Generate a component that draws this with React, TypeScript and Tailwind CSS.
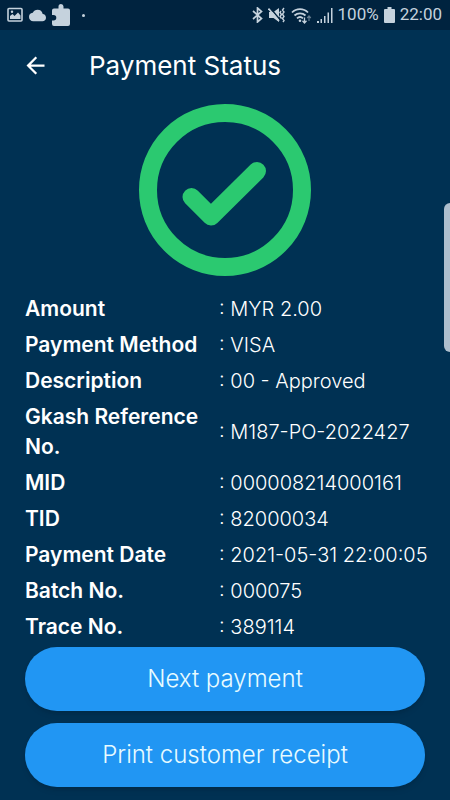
import { MdArrowBack, MdCloud } from 'react-icons/md';

type Detail = { label: string; value: string };

const details: Detail[] = [
  { label: 'Amount', value: 'MYR 2.00' },
  { label: 'Payment Method', value: 'VISA' },
  { label: 'Description', value: '00 - Approved' },
  { label: 'Gkash Reference No.', value: 'M187-PO-2022427' },
  { label: 'MID', value: '000008214000161' },
  { label: 'TID', value: '82000034' },
  { label: 'Payment Date', value: '2021-05-31 22:00:05' },
  { label: 'Batch No.', value: '000075' },
  { label: 'Trace No.', value: '389114' },
];

export default function App() {
  return (
    <div className="relative min-h-screen bg-[#003153] font-['Inter',sans-serif] text-white">
      <StatusBar />

      <header className="flex h-[70px] items-center gap-10 px-[22px]">
        <button type="button" aria-label="Back">
          <MdArrowBack size={27} />
        </button>
        <h1 className="text-[26px]">Payment Status</h1>
      </header>

      <main className="px-[25px] pt-1">
        <SuccessMark />

        <table className="mt-[15px] w-full table-fixed text-xl leading-[30px]">
          <tbody>
            {details.map((d) => (
              <tr key={d.label}>
                <th scope="row" className="w-[194px] py-[3px] text-left text-[21px] font-semibold">
                  {d.label}
                </th>
                <td className="py-[3px] font-light whitespace-nowrap">: {d.value}</td>
              </tr>
            ))}
          </tbody>
        </table>

        <div className="mt-0.5 flex flex-col gap-3 pb-3">
          <ActionButton>Next payment</ActionButton>
          <ActionButton>Print customer receipt</ActionButton>
        </div>
      </main>

      {/* edge panel handle */}
      <div className="absolute top-[203px] right-0 h-[149px] w-1.5 rounded-l-md bg-[#aebfce]" />
    </div>
  );
}

function StatusBar() {
  return (
    <div className="flex h-[30px] items-center justify-between bg-[#00233f] pr-2 pl-[7px] font-['Roboto',sans-serif] text-[17px] text-[#c5d2dd]">
      <div className="flex items-center gap-1.5">
        <PictureIcon />
        <MdCloud size={17} />
        <PuzzleIcon />
        <span className="ml-1.5 h-[3px] w-[3px] rounded-full bg-current" />
      </div>
      <div className="flex items-center gap-[5px]">
        <BluetoothIcon />
        <VibrateIcon />
        <WifiIcon />
        <SignalIcon />
        <span>100%</span>
        <BatteryIcon />
        <span>22:00</span>
      </div>
    </div>
  );
}

function PictureIcon() {
  return (
    <svg width="16" height="16" viewBox="0 0 16 16" fill="none" stroke="currentColor" strokeWidth="1.6">
      <rect x="1" y="1.5" width="14" height="12.5" rx="1" />
      <path d="M3 12V9l2.5-2 2 2L11 5.5l2.5 3V12z" fill="currentColor" stroke="none" />
      <circle cx="5" cy="4.7" r="1.2" fill="currentColor" stroke="none" />
    </svg>
  );
}

function PuzzleIcon() {
  return (
    <svg width="18" height="22" viewBox="0 0 18 22" fill="currentColor">
      <path d="M2 4.5h4.500V2.500a2.500 2.500 0 0 1 5 0v2H16a2 2 0 0 1 2 2V20a2 2 0 0 1-2 2H2a2 2 0 0 1-2-2v-3.500h1.500a2.800 2.800 0 0 0 0-5.600H0V6.500a2 2 0 0 1 2-2z" />
    </svg>
  );
}

function BluetoothIcon() {
  return (
    <svg width="11" height="16" viewBox="0 0 11 16" fill="none" stroke="currentColor" strokeWidth="1.7">
      <path d="M1 4l8.500 7.500-4 3.500V1l4 3.500L1 12" />
    </svg>
  );
}

function VibrateIcon() {
  return (
    <svg width="18" height="16" viewBox="0 0 18 16" fill="none" stroke="currentColor">
      <path d="M1 5h4.500L11 1v14l-5.500-4H1z" fill="currentColor" stroke="none" />
      <path d="M1.800 0.500l10.500 12.500" stroke="#00233f" strokeWidth="1.400" />
      <path d="M0.500 1.500l10.500 12.500" strokeWidth="1.600" />
      <path d="M13 4l-1 1.500 1.500 2L12 9.500l1.500 2M16 1l-1.500 2L16 5l-1.500 2.200L16 9.500l-1.500 2L16 13.500l-1 1.500" strokeWidth="1.400" />
    </svg>
  );
}

function WifiIcon() {
  return (
    <svg width="21" height="17" viewBox="0 0 21 17" fill="none" stroke="currentColor" strokeWidth="1.8">
      <path d="M1 5.500a11 11 0 0 1 16 0M3.500 8.500a8 8 0 0 1 11 0M6 11.300a4.500 4.500 0 0 1 6 0" />
      <circle cx="9" cy="13.700" r="1.300" fill="currentColor" stroke="none" />
      <path d="M13.500 10.500v5.500M11.500 13.800l2 2.200 2-2.200" strokeWidth="1.300" />
      <path d="M18 14V9M16.200 11l1.800-2 1.800 2" strokeWidth="1.200" opacity=".5" />
    </svg>
  );
}

function SignalIcon() {
  return (
    <svg width="16" height="16" viewBox="0 0 16 16" fill="currentColor">
      <path d="M0 14h2v2H0zM3.500 12h1.500v4H3.500zM7 9h1.500v7H7zM10.500 5.500h1.500V16h-1.500zM14 1h1.500v15H14z" />
    </svg>
  );
}

function BatteryIcon() {
  return (
    <svg width="11" height="16" viewBox="0 0 11 16" fill="currentColor">
      <path d="M3.500 0h4v2H10a1 1 0 0 1 1 1v12a1 1 0 0 1-1 1H1a1 1 0 0 1-1-1V3a1 1 0 0 1 1-1h2.500z" />
    </svg>
  );
}

function SuccessMark() {
  return (
    <svg
      className="mx-auto block"
      width="172"
      height="172"
      viewBox="0 0 172 172"
      fill="none"
      stroke="#2bc970"
      strokeWidth="18"
      strokeLinecap="round"
      strokeLinejoin="round"
    >
      <circle cx="86" cy="86" r="77" />
      <path d="M52.500 93l19.500 19.500L118 67" />
    </svg>
  );
}

function ActionButton({ children }: { children: string }) {
  return (
    <button
      type="button"
      className="h-16 w-full rounded-full bg-[#2196f3] text-2xl font-light text-[#e8fbff] shadow-md"
    >
      {children}
    </button>
  );
}
